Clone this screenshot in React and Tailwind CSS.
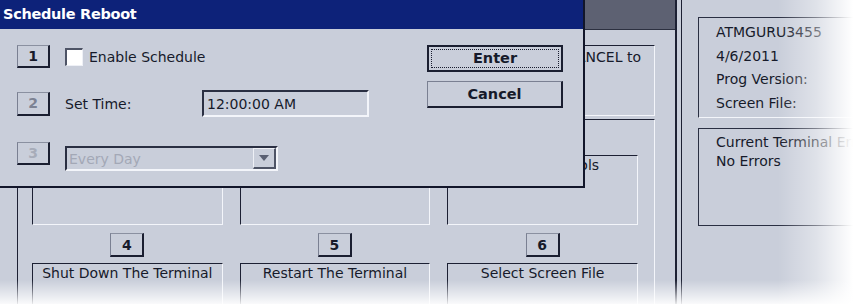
import React from "react";

const ink = "text-[#161a2a]";

function NumButton({ n, tone = "on", size = "w-[34px] h-[24px]" }) {
  const color =
    tone === "on" ? "text-[#161a2a]" : tone === "dim" ? "text-[#7c8293]" : "text-[#a7acb9]";
  return (
    <div
      className={`${size} shrink-0 flex items-center justify-center bg-[#c9ceda] border-t border-l border-r-2 border-b-2 border-t-[#8a90a0] border-l-[#7a8092] border-r-[#1a1e30] border-b-[#1a1e30] font-bold text-[14px] ${color}`}
    >
      {n}
    </div>
  );
}

function LabelBox({ children }) {
  return (
    <div className="w-full h-[70px] border-t border-l border-b border-r border-t-[#1c2033] border-l-[#1c2033] border-b-[#f3f5fa] border-r-[#f3f5fa] text-center leading-[16px] pt-[1px] whitespace-nowrap">
      {children}
    </div>
  );
}

function Cell({ n, label }) {
  return (
    <div className="flex flex-col items-center">
      <NumButton n={n} />
      <div className="mt-[6px] w-full">
        <LabelBox>{label}</LabelBox>
      </div>
    </div>
  );
}

function Dialog() {
  return (
    <div className="absolute left-0 top-0 w-[585px] h-[188px] bg-[#c9ceda] border-r-2 border-b-2 border-[#12162a]">
      {/* title bar */}
      <div className="h-[29px] bg-[#0d2279] pl-[3px] text-white font-bold text-[14.5px] leading-[29px] tracking-[-0.3px]">
        Schedule Reboot
      </div>

      <div className="flex">
        {/* fields */}
        <div className="w-[427px] pl-[17px] pt-[16px]">
          <div className="flex items-center h-[23px]">
            <NumButton n="1" size="w-[33px] h-[23px]" />
            <div className="ml-[15px] w-[18px] h-[18px] bg-white border-t-2 border-l-2 border-b border-r border-t-[#4e5466] border-l-[#4e5466] border-b-[#eef0f6] border-r-[#eef0f6]" />
            <span className="ml-[6px]">Enable Schedule</span>
          </div>

          <div className="flex items-center h-[27px] mt-[22px]">
            <NumButton n="2" tone="dim" size="w-[33px] h-[24px]" />
            <span className="ml-[15px] w-[137px]">Set Time:</span>
            <div className="w-[167px] h-[27px] flex items-center pl-[3px] border-t-2 border-l-2 border-b-2 border-r-2 border-t-[#2a2f42] border-l-[#2a2f42] border-b-[#f3f5fa] border-r-[#f3f5fa]">
              12:00:00 AM
            </div>
          </div>

          <div className="flex items-start mt-[25px]">
            <NumButton n="3" tone="off" size="w-[33px] h-[23px]" />
            <div className="ml-[15px] mt-[4px] w-[213px] h-[25px] flex items-center justify-between border-t-2 border-l-2 border-b-2 border-r-2 border-t-[#2a2f42] border-l-[#2a2f42] border-b-[#f3f5fa] border-r-[#f3f5fa]">
              <span className="pl-[2px] text-[#a3a8b6]">Every Day</span>
              <div className="w-[23px] h-[21px] flex items-center justify-center border-t border-l border-r-2 border-b-2 border-t-[#eef0f6] border-l-[#eef0f6] border-r-[#4e5466] border-b-[#4e5466]">
                <svg width="10" height="6" viewBox="0 0 10 6">
                  <polygon points="0,0 10,0 5,6" fill="#5a6072" />
                </svg>
              </div>
            </div>
          </div>
        </div>

        {/* action buttons */}
        <div className="pt-[16px] font-bold text-[14.5px]">
          <div className="w-[136px] h-[27px] border-2 border-[#1a1e30] p-[2px]">
            <div className="w-full h-full flex items-center justify-center border border-dotted border-[#1a1e30]">
              Enter
            </div>
          </div>
          <div className="mt-[9px] w-[136px] h-[27px] flex items-center justify-center border-t border-l border-r-2 border-b-2 border-t-[#7a8092] border-l-[#7a8092] border-r-[#1a1e30] border-b-[#1a1e30]">
            Cancel
          </div>
        </div>
      </div>
    </div>
  );
}

export default function App() {
  return (
    <div
      className={`relative w-[853px] h-[304px] overflow-hidden bg-[#c9ceda] ${ink} font-['DejaVu_Sans',sans-serif] text-[14px] leading-none`}
    >
      <div className="flex h-full">
        {/* terminal menu area */}
        <div className="w-[675px] shrink-0 flex flex-col">
          <div className="h-[30px] shrink-0 bg-[#5d6172] border-b border-[#2c3040]" />

          <div className="pl-[17px] pr-[20px] pt-[15px]">
            <div className="h-[71px] border-t border-l border-b border-r border-t-[#1c2033] border-l-[#1c2033] border-b-[#f3f5fa] border-r-[#f3f5fa]">
              <p className="text-right pr-[13px] pt-[3px] leading-[16px] whitespace-nowrap">
                CANCEL to
              </p>
            </div>
          </div>

          <div className="ml-[17px] mr-[20px] mt-[3px] flex-1 border-t border-l border-r border-t-[#1c2033] border-l-[#1c2033] border-r-[#f3f5fa] pl-[14px] pr-[16px] pt-[5px]">
            <div className="grid grid-cols-3 gap-x-[17px] gap-y-[8px]">
              <Cell n="1" label="" />
              <Cell n="2" label="" />
              <Cell n="3" label="Diagnostic Tools" />
              <Cell n="4" label="Shut Down The Terminal" />
              <Cell n="5" label="Restart The Terminal" />
              <Cell n="6" label="Select Screen File" />
            </div>
          </div>
        </div>

        {/* divider */}
        <div className="w-[7px] shrink-0 border-l-2 border-r border-[#1c2033]" />

        {/* status panel */}
        <div className="flex-1 overflow-hidden pl-[16px] pt-[17px]">
          <div className="w-[230px] h-[101px] border-t border-l border-b border-t-[#2a2f42] border-l-[#2a2f42] border-b-[#f3f5fa] pl-[17px] pt-[3px] leading-[23.5px] whitespace-nowrap">
            <p>ATMGURU3455</p>
            <p>4/6/2011</p>
            <p>Prog Version:</p>
            <p>Screen File:</p>
          </div>
          <div className="mt-[10px] w-[230px] h-[98px] border border-[#2a2f42] pl-[17px] pt-[4px] leading-[19px] whitespace-nowrap">
            <p>Current Terminal Errors</p>
            <p>No Errors</p>
          </div>
        </div>
      </div>

      <Dialog />

      {/* photo fade at the edges */}
      <div className="absolute right-0 top-0 h-full w-[75px] bg-linear-to-r from-white/0 via-white/40 to-white" />
      <div className="absolute left-0 bottom-0 w-full h-[24px] bg-linear-to-b from-white/0 to-white/90" />
    </div>
  );
}
